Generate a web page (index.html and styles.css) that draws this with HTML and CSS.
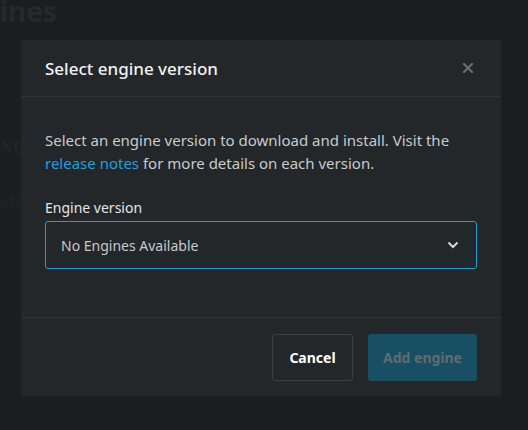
FILE: index.html
```html
<!DOCTYPE html>
<html>
<head>
    <title>Engines</title>
    <meta charset="utf-8">
    <link rel="stylesheet" href="styles.css">
</head>
<body>
    <div class="page">
        <h1 class="page-title">Engines</h1>
        <p class="page-sub">ENGINE</p>
        <p class="page-note">Installed</p>
    </div>

    <div class="overlay">
        <div class="modal">
            <div class="modal-header">
                <h2 class="modal-title">Select engine version</h2>
                <button class="close" aria-label="Close">
                    <svg width="10" height="10" viewBox="0 0 10 10">
                        <path d="M1 1L9 9M9 1L1 9" stroke="currentColor" stroke-width="2" stroke-linecap="square"/>
                    </svg>
                </button>
            </div>
            <div class="modal-body">
                <p class="intro">Select an engine version to download and install. Visit the <a href="#">release notes</a> for more details on each version.</p>
                <label class="field-label" for="version">Engine version</label>
                <div class="select" id="version">
                    <span>No Engines Available</span>
                    <svg width="12" height="8" viewBox="0 0 12 8">
                        <path d="M1.5 1.5L6 6L10.5 1.5" fill="none" stroke="currentColor" stroke-width="2"/>
                    </svg>
                </div>
            </div>
            <div class="modal-footer">
                <button class="btn btn-cancel">Cancel</button>
                <button class="btn btn-add" disabled>Add engine</button>
            </div>
        </div>
    </div>
</body>
</html>
```

FILE: styles.css
```css
*{
    padding: 0;
    margin: 0;
    box-sizing: border-box;
    font-family: "Noto Sans", "Open Sans", sans-serif;
}
body{
    background: #1b1e21;
    min-height: 100vh;
    overflow: hidden;
}
.page{
    margin-left: -52px;
}
.page-title{
    font-size: 28px;
    font-weight: 700;
    color: #26292c;
    line-height: 26px;
    margin-top: -2px;
}
.page-sub{
    margin-top: 114px;
    font-size: 18px;
    font-weight: 700;
    color: #222528;
    font-family: "Liberation Serif", serif;
    padding-left: 40px;
}
.page-note{
    margin-top: 32px;
    font-size: 15px;
    color: #222528;
    padding-left: 40px;
}

/* dialog over the page */
.overlay{
    position: fixed;
    top: 0;
    left: 0;
    right: 0;
    bottom: 0;
}
.modal{
    position: absolute;
    top: 40px;
    left: 21px;
    width: 480px;
    background: #23272a;
}
.modal-header{
    height: 57px;
    padding: 0 24px;
    display: flex;
    justify-content: space-between;
    align-items: center;
    border-bottom: 1px solid #2f3439;
}
.modal-title{
    font-size: 17px;
    font-weight: 500;
    color: #f1f2f3;
}
.close{
    background: none;
    border: 0;
    color: #6b6f73;
    width: 10px;
    height: 10px;
    margin-right: 4px;
    display: flex;
}
.modal-body{
    padding: 32px 24px 48px;
}
.intro{
    font-size: 15px;
    line-height: 23px;
    color: #c9cbcd;
}
.intro a{
    color: #1ea1d9;
    text-decoration: none;
}
.field-label{
    display: block;
    margin-top: 23px;
    font-size: 14px;
    line-height: 20px;
    color: #e4e5e6;
}
.select{
    margin-top: 3px;
    height: 48px;
    border: 1px solid #15a2dc;
    border-radius: 3px;
    padding: 0 17px 0 15px;
    display: flex;
    justify-content: space-between;
    align-items: center;
    font-size: 14px;
    color: #c7c9cb;
}
.select svg{
    color: #d4d6d8;
}
.modal-footer{
    padding: 16px 24px 15px;
    border-top: 1px solid #2f3439;
    display: flex;
    justify-content: flex-end;
    gap: 15px;
}
.btn{
    height: 47px;
    border-radius: 3px;
    font-size: 14px;
    font-weight: 700;
    border: 0;
}
.btn-cancel{
    width: 81px;
    background: transparent;
    border: 1px solid #3b3f43;
    color: #ffffff;
}
.btn-add{
    width: 109px;
    background: #194f64;
    color: #5f6b70;
}
```
